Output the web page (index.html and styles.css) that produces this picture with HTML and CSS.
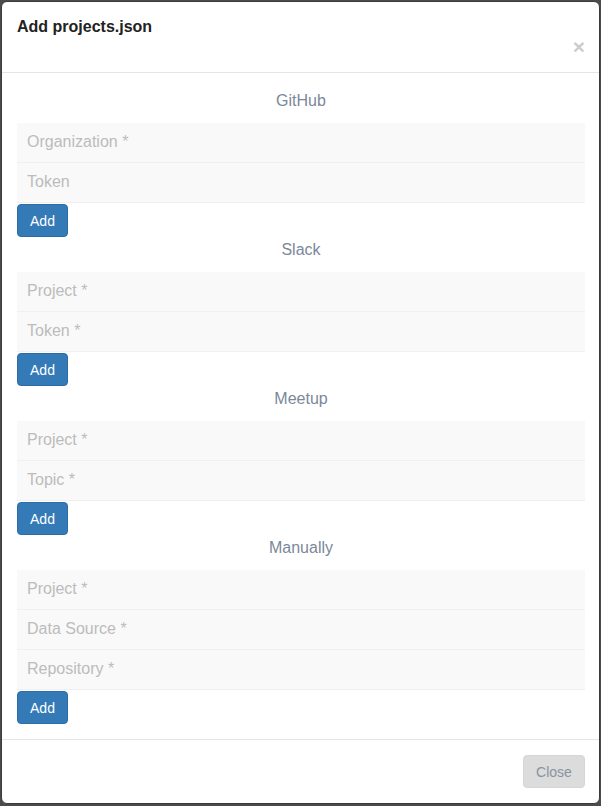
FILE: index.html
```html
<!DOCTYPE html>
<html>
<head>
<meta charset="utf-8">
<link rel="stylesheet" href="styles.css">
</head>
<body>
<div class="modal">
  <div class="modal-header">
    <h4 class="modal-title">Add projects.json</h4>
    <div class="close-row"><span class="close">×</span></div>
  </div>
  <div class="modal-body">
    <div class="section">
      <div class="section-title">GitHub</div>
      <input class="field" placeholder="Organization *">
      <input class="field" placeholder="Token">
      <button class="btn-add">Add</button>
    </div>
    <div class="section">
      <div class="section-title">Slack</div>
      <input class="field" placeholder="Project *">
      <input class="field" placeholder="Token *">
      <button class="btn-add">Add</button>
    </div>
    <div class="section">
      <div class="section-title">Meetup</div>
      <input class="field" placeholder="Project *">
      <input class="field" placeholder="Topic *">
      <button class="btn-add">Add</button>
    </div>
    <div class="section">
      <div class="section-title">Manually</div>
      <input class="field" placeholder="Project *">
      <input class="field" placeholder="Data Source *">
      <input class="field" placeholder="Repository *">
      <button class="btn-add">Add</button>
    </div>
  </div>
  <div class="modal-footer">
    <button class="btn-close">Close</button>
  </div>
</div>
</body>
</html>
```
FILE: styles.css
```css
html, body {
  margin: 0;
  padding: 0;
  background: #4b4b4b;
  height: 806px;
  overflow: hidden;
}
body {
  font-family: "Liberation Sans", Arial, sans-serif;
  font-size: 14px;
  color: #333;
  padding-top: 1px;
  padding-left: 1px;
}
.modal {
  box-sizing: border-box;
  width: 599px;
  height: 803px;
  background: #fff;
  border: 1px solid #3a3a3a;
  border-radius: 6px;
  display: flex;
  flex-direction: column;
}
.modal-header {
  padding: 16px 14px 15px 15px;
  border-bottom: 1px solid #e5e5e5;
}
.modal-title {
  margin: 0;
  font-size: 16px;
  font-weight: bold;
  line-height: 18px;
  color: #222;
}
.close-row {
  display: flex;
  justify-content: flex-end;
  height: 21px;
}
.close {
  font-size: 21px;
  font-weight: bold;
  line-height: 21px;
  color: #000;
  opacity: 0.2;
}
.modal-body {
  padding: 15px 14px 14px 15px;
  flex: 1;
}
.section {
  display: flex;
  flex-direction: column;
  align-items: stretch;
}
.section-title {
  text-align: center;
  font-size: 16px;
  line-height: 20px;
  margin: 3px 0 12px;
  color: #7b8899;
}
.field {
  box-sizing: border-box;
  height: 40px;
  border: 0;
  border-bottom: 1px solid #f0f0f0;
  background: #f9f9f9;
  padding: 0 10px 2px;
  font-family: "Liberation Sans", Arial, sans-serif;
  font-size: 16px;
  color: #555;
  outline: none;
  margin: 0;
}
.field::placeholder {
  color: #bcbcbc;
}
.btn-add {
  align-self: flex-start;
  box-sizing: border-box;
  margin-top: 1px;
  height: 33px;
  width: 51px;
  padding: 0;
  background: #337ab7;
  border: 1px solid #2e6da4;
  border-radius: 4px;
  color: #fff;
  font-family: "Liberation Sans", Arial, sans-serif;
  font-size: 14px;
}
.modal-footer {
  padding: 15px 14px 15px 15px;
  border-top: 1px solid #e5e5e5;
  display: flex;
  justify-content: flex-end;
}
.btn-close {
  box-sizing: border-box;
  height: 33px;
  width: 62px;
  padding: 0;
  background: #dcdcdc;
  border: 1px solid #d6d6d6;
  border-radius: 4px;
  color: #8793a1;
  font-family: "Liberation Sans", Arial, sans-serif;
  font-size: 14px;
}
```
